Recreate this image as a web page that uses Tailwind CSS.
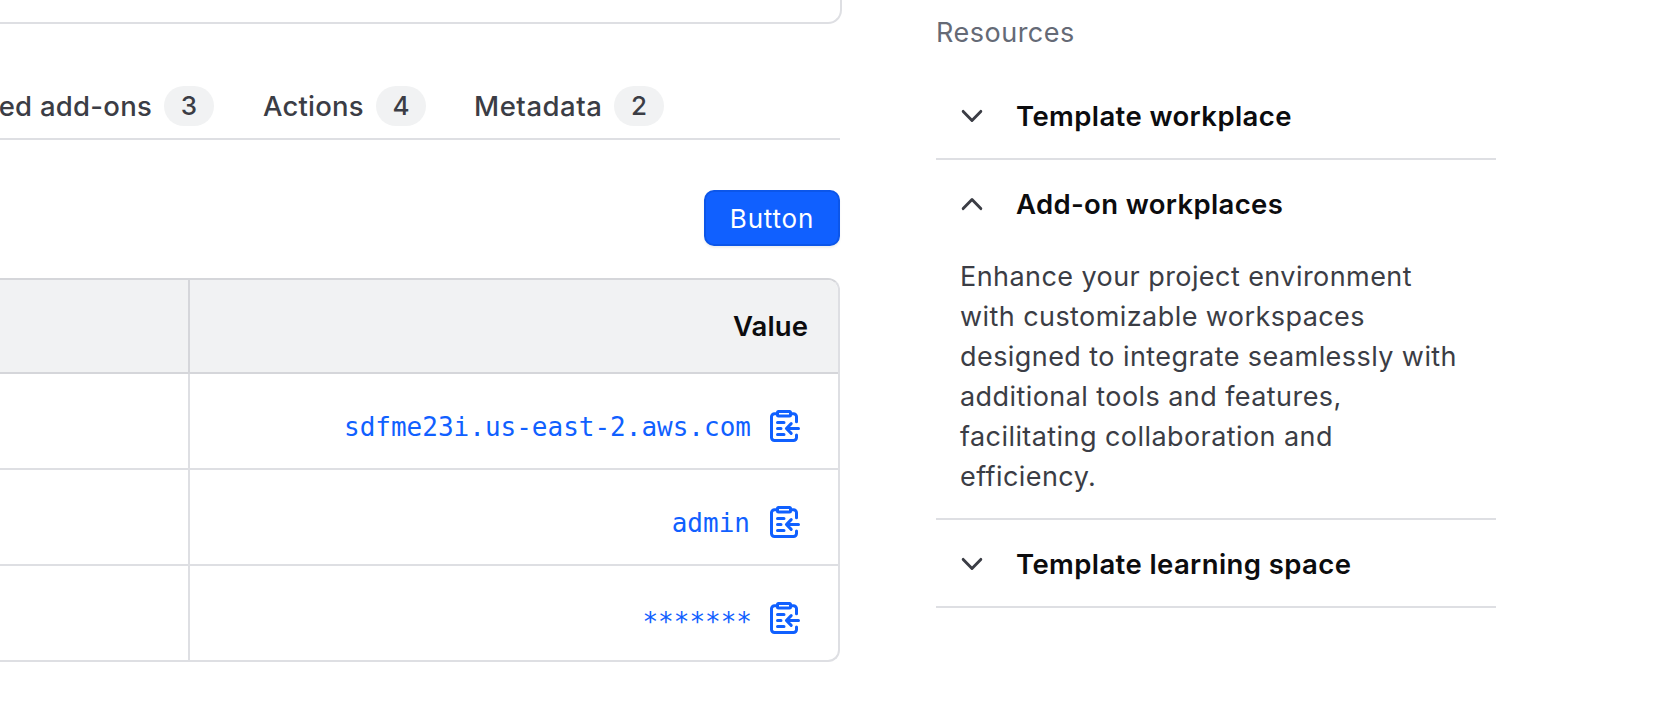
<!DOCTYPE html>
<html lang="en">
<head>
<meta charset="utf-8">
<title>Resources</title>
<script src="https://cdn.jsdelivr.net/npm/@tailwindcss/browser@4"></script>
</head>
<body class="bg-white font-['Inter','Liberation_Sans',sans-serif] text-[#3b3d45]">
<svg class="hidden" xmlns="http://www.w3.org/2000/svg">
  <symbol id="clipboard" viewBox="0 0 16 16">
    <g fill="none" stroke="currentColor" stroke-width="1.5" stroke-linecap="round" stroke-linejoin="round">
      <rect x="4.75" y="0.75" width="6.5" height="2.2" rx="0.5"/>
      <path d="M4.5 1.9H3.3A1.5 1.5 0 0 0 1.75 3.4v10.3a1.5 1.5 0 0 0 1.5 1.55h9.5a1.5 1.5 0 0 0 1.5-1.55v-1.2M11.5 1.9h1.2a1.5 1.5 0 0 1 1.55 1.5v2.5"/>
      <path d="M4.75 6.25h3.25M4.75 9.25h1.75M4.75 12.25h3.25M15.25 9.25H9.4M11.6 6.800L9.200 9.25l2.4 2.45"/>
    </g>
  </symbol>
  <symbol id="chevron" viewBox="0 0 24 16">
    <path d="M3.2 3.4L12 12.4l8.800-9" fill="none" stroke="currentColor" stroke-width="2.9" stroke-linecap="round" stroke-linejoin="round"/>
  </symbol>
</svg>
<div class="flex h-[728px] w-[1672px] overflow-hidden">
  <main class="w-[842px]">
    <div class="h-6 rounded-br-[14px] border-r-2 border-b-2 border-[#dedfe3]"></div>

    <nav class="mt-11 flex h-[72px] w-[840px] items-start gap-12 border-b-2 border-[#dedfe3] pt-[18px] text-[27.5px] leading-10 font-medium">
      <div class="flex h-10 w-[214px] shrink-0 items-center justify-end gap-3"><span class="tracking-[0.25px] whitespace-nowrap">ed add-ons</span><span class="flex h-10 w-[50px] shrink-0 items-center justify-center rounded-full bg-[#f1f2f3] text-[26px]">3</span></div>
      <div class="flex h-10 w-[164px] shrink-0 items-center justify-between"><span class="pl-px tracking-[0.2px]">Actions</span><span class="flex h-10 w-[50px] items-center justify-center rounded-full bg-[#f1f2f3] text-[26px]">4</span></div>
      <div class="flex h-10 w-[190px] shrink-0 items-center justify-between"><span class="tracking-[0.55px]">Metadata</span><span class="flex h-10 w-[50px] items-center justify-center rounded-full bg-[#f1f2f3] text-[26px]">2</span></div>
    </nav>

    <div class="mt-[50px] flex w-[840px] justify-end">
      <button class="h-14 w-[136px] rounded-[10px] border-2 border-[#0c56e9] bg-[#1060ff] pt-px text-[26px] leading-none tracking-[0.8px] text-white shadow-[0_2px_2px_rgba(101,106,118,0.1)]">Button</button>
    </div>

    <div class="mt-8 w-[840px] overflow-hidden rounded-r-[12px] border-2 border-l-0 border-[#dedfe3] border-t-[#d5d6da]">
      <div class="flex h-[94px] border-b-2 border-[#d5d6da] bg-[#f1f2f3]">
        <div class="w-[190px] border-r-2 border-[#d5d6da]"></div>
        <div class="flex grow items-center justify-end pr-[30px] text-[27.5px] leading-10 font-semibold tracking-[0.1px] text-[#0c0c0e]">Value</div>
      </div>
      <div class="flex h-24 border-b-2 border-[#dedfe3]">
        <div class="w-[190px] border-r-2 border-[#dedfe3]"></div>
        <div class="flex grow items-start justify-end gap-[17px] pt-9 pr-[38px] font-['DejaVu_Sans_Mono',monospace] text-[26px] leading-[34px] text-[#1060ff]"><span>sdfme23i.us-east-2.aws.com</span><svg class="size-8"><use href="#clipboard"/></svg></div>
      </div>
      <div class="flex h-24 border-b-2 border-[#dedfe3]">
        <div class="w-[190px] border-r-2 border-[#dedfe3]"></div>
        <div class="flex grow items-start justify-end gap-[18px] pt-9 pr-[38px] font-['DejaVu_Sans_Mono',monospace] text-[26px] leading-[34px] text-[#1060ff]"><span>admin</span><svg class="size-8"><use href="#clipboard"/></svg></div>
      </div>
      <div class="flex h-[94px]">
        <div class="w-[190px] border-r-2 border-[#dedfe3]"></div>
        <div class="flex grow items-start justify-end gap-4 pt-9 pr-[38px] font-['DejaVu_Sans_Mono',monospace] text-[26px] leading-[34px] text-[#1060ff]"><span class="pt-[3px]">*******</span><svg class="size-8"><use href="#clipboard"/></svg></div>
      </div>
    </div>
  </main>

  <aside class="ml-[94px] w-[560px] pt-[13px]">
    <h2 class="h-[59px] text-[27px] leading-10 tracking-[0.5px] text-[#656a76]">Resources</h2>
    <section class="flex h-[88px] items-center gap-[32px] border-b-2 border-[#dedfe3] pt-0.5 pl-6">
      <svg class="h-4 w-6"><use href="#chevron"/></svg>
      <h3 class="text-[27.5px] leading-10 font-semibold tracking-[0.4px] whitespace-nowrap text-[#0c0c0e]">Template workplace</h3>
    </section>
    <section class="h-[360px] border-b-2 border-[#dedfe3]">
      <div class="flex h-[88px] items-center gap-[32px] pl-6">
        <svg class="h-4 w-6 rotate-180"><use href="#chevron"/></svg>
        <h3 class="text-[27.5px] leading-10 font-semibold tracking-[0.35px] whitespace-nowrap text-[#0c0c0e]">Add-on workplaces</h3>
      </div>
      <p class="mt-[9px] pl-6 text-[27px] leading-10 tracking-[0.43px] whitespace-nowrap">Enhance your project environment<br>with customizable workspaces<br>designed to integrate seamlessly with<br>additional tools and features,<br>facilitating collaboration and<br>efficiency.</p>
    </section>
    <section class="flex h-[88px] items-center gap-[32px] border-b-2 border-[#dedfe3] pt-0.5 pl-6">
      <svg class="h-4 w-6"><use href="#chevron"/></svg>
      <h3 class="text-[27.5px] leading-10 font-semibold tracking-[0.4px] whitespace-nowrap text-[#0c0c0e]">Template learning space</h3>
    </section>
  </aside>
</div>
</body>
</html>
